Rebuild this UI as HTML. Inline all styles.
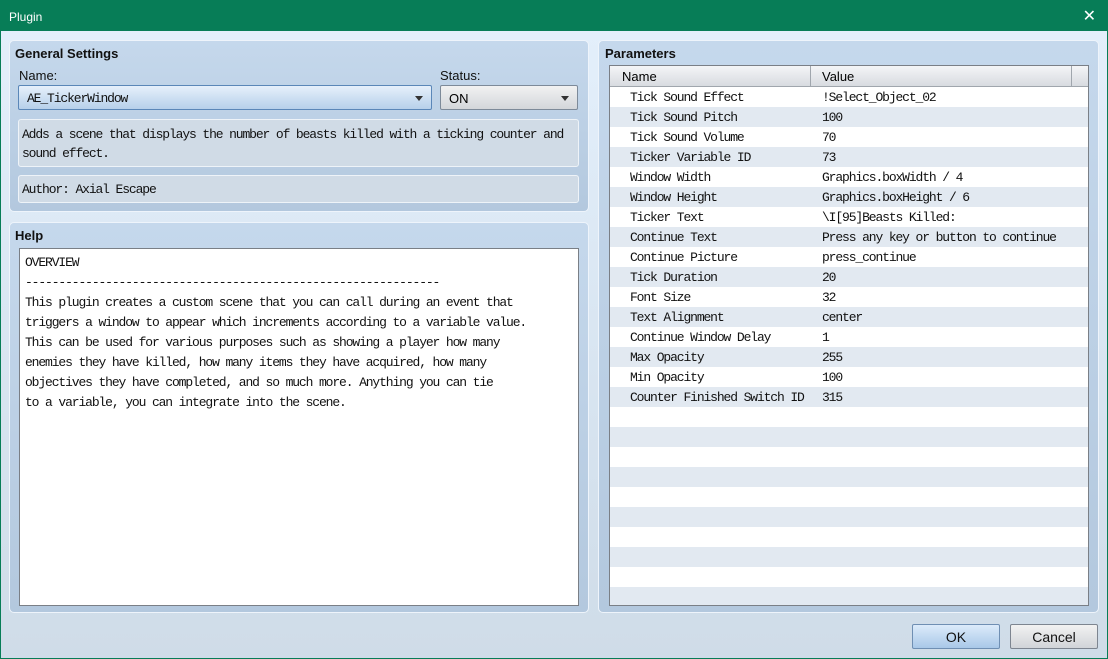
<!DOCTYPE html>
<html><head><style>
*{box-sizing:border-box;margin:0;padding:0}
body{width:1108px;height:659px;overflow:hidden;font-family:"Liberation Sans",sans-serif;background:#077d57;position:relative}
.title{position:absolute;left:0;top:0;width:1108px;height:31px;background:#077d57;color:#fff;font-size:12px;padding:10px 0 0 9px}
.close{position:absolute;right:12px;top:6px;color:#fff;font-size:16px}
.win{position:absolute;left:1px;top:31px;width:1106px;height:627px;background:linear-gradient(#e3effb,#cfdce8);}
.panel{position:absolute;border:1px solid #eef4fb;border-radius:5px;background:linear-gradient(#c5d8ec,#b3c8de)}
.h{position:absolute;font-weight:bold;font-size:13px;color:#111}
.lbl{position:absolute;font-size:13px;color:#111}
.mono{font-family:"Liberation Mono",monospace;font-size:13px;letter-spacing:-1.12px;color:#111}
.combo{position:absolute;border:1px solid #7d8a99;border-radius:2px;height:25px;font-size:13px;padding:5px 0 0 8px}
.arr{position:absolute;right:8px;top:10px;width:0;height:0;border-left:4px solid transparent;border-right:4px solid transparent;border-top:5px solid #333}
.box{position:absolute;border:1px solid #eef3f8;border-radius:3px;background:#d0dbe6}
table{border-collapse:collapse}
td{height:20px;padding:0;white-space:pre}
.btn{position:absolute;top:624px;width:88px;height:25px;border:1px solid #7d8590;border-radius:2px;font-size:14px;text-align:center;padding-top:4px;color:#111}
</style></head><body>
<div class="title">Plugin<span class="close">✕</span></div>
<div class="win"></div>
<div class="panel" style="left:9px;top:40px;width:580px;height:172px"></div>
<div class="h" style="left:15px;top:46px">General Settings</div>
<div class="lbl" style="left:19px;top:68px">Name:</div>
<div class="lbl" style="left:440px;top:68px">Status:</div>
<div class="combo mono" style="left:18px;top:85px;width:414px;background:linear-gradient(#e6f0fb,#b7d0ea);border-color:#5b87b8;padding-top:5px">AE_TickerWindow<span class="arr"></span></div>
<div class="combo" style="left:440px;top:85px;width:138px;background:linear-gradient(#f2f2f2,#d3d6da)">ON<span class="arr"></span></div>
<div class="box mono" style="left:18px;top:119px;width:561px;height:48px;padding:5px 0 0 3px;line-height:19px">Adds a scene that displays the number of beasts killed with a ticking counter and<br>sound effect.</div>
<div class="box mono" style="left:18px;top:175px;width:561px;height:28px;padding:6px 0 0 3px">Author: Axial Escape</div>

<div class="panel" style="left:9px;top:222px;width:580px;height:391px"></div>
<div class="h" style="left:15px;top:228px">Help</div>
<div class="mono" style="position:absolute;left:19px;top:248px;width:560px;height:358px;background:#fff;border:1px solid #7a7f86;padding:4px 0 0 5px;line-height:20px;white-space:pre">OVERVIEW
--------------------------------------------------------------
This plugin creates a custom scene that you can call during an event that
triggers a window to appear which increments according to a variable value.
This can be used for various purposes such as showing a player how many
enemies they have killed, how many items they have acquired, how many
objectives they have completed, and so much more. Anything you can tie
to a variable, you can integrate into the scene.</div>

<div class="panel" style="left:598px;top:40px;width:501px;height:573px"></div>
<div class="h" style="left:605px;top:46px">Parameters</div>
<div style="position:absolute;left:609px;top:65px;width:480px;height:541px;border:1px solid #7a7f86;background:repeating-linear-gradient(#fff 0 20px,#e2e9f1 20px 40px) 0 21px/100% 100% no-repeat,#fff;overflow:hidden">
<div style="height:21px;background:linear-gradient(#f4f5f7,#d8dbe0);border-bottom:1px solid #a0a6ad;position:relative;font-size:13px">
<span style="position:absolute;left:12px;top:3px">Name</span>
<span style="position:absolute;left:200px;top:0;height:20px;border-left:1px solid #a0a6ad"></span>
<span style="position:absolute;left:212px;top:3px">Value</span>
<span style="position:absolute;left:461px;top:0;height:20px;border-left:1px solid #a0a6ad"></span>
</div>
<table class="mono">
<tr><td style="width:200px;padding-left:20px">Tick Sound Effect</td><td style="padding-left:12px">!Select_Object_02</td></tr>
<tr><td style="padding-left:20px">Tick Sound Pitch</td><td style="padding-left:12px">100</td></tr>
<tr><td style="padding-left:20px">Tick Sound Volume</td><td style="padding-left:12px">70</td></tr>
<tr><td style="padding-left:20px">Ticker Variable ID</td><td style="padding-left:12px">73</td></tr>
<tr><td style="padding-left:20px">Window Width</td><td style="padding-left:12px">Graphics.boxWidth / 4</td></tr>
<tr><td style="padding-left:20px">Window Height</td><td style="padding-left:12px">Graphics.boxHeight / 6</td></tr>
<tr><td style="padding-left:20px">Ticker Text</td><td style="padding-left:12px">\I[95]Beasts Killed:</td></tr>
<tr><td style="padding-left:20px">Continue Text</td><td style="padding-left:12px">Press any key or button to continue</td></tr>
<tr><td style="padding-left:20px">Continue Picture</td><td style="padding-left:12px">press_continue</td></tr>
<tr><td style="padding-left:20px">Tick Duration</td><td style="padding-left:12px">20</td></tr>
<tr><td style="padding-left:20px">Font Size</td><td style="padding-left:12px">32</td></tr>
<tr><td style="padding-left:20px">Text Alignment</td><td style="padding-left:12px">center</td></tr>
<tr><td style="padding-left:20px">Continue Window Delay</td><td style="padding-left:12px">1</td></tr>
<tr><td style="padding-left:20px">Max Opacity</td><td style="padding-left:12px">255</td></tr>
<tr><td style="padding-left:20px">Min Opacity</td><td style="padding-left:12px">100</td></tr>
<tr><td style="padding-left:20px">Counter Finished Switch ID</td><td style="padding-left:12px">315</td></tr>
</table>
</div>
<div class="btn" style="left:912px;background:linear-gradient(#dcebfa,#a9c8e8);border-color:#6f8fb3">OK</div>
<div class="btn" style="left:1010px;background:linear-gradient(#f2f2f2,#d1d4d8)">Cancel</div>
</body></html>
